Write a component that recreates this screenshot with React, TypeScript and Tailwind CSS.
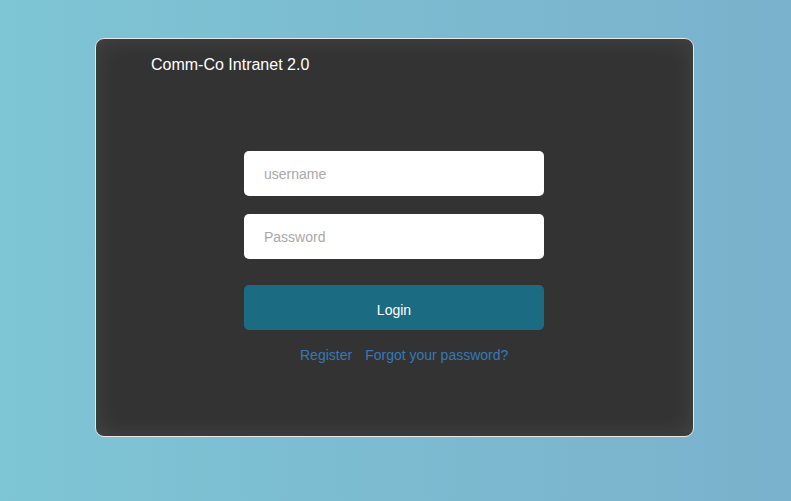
export default function App() {
  return (
    <div
      className="h-[501px] w-full bg-gradient-to-r from-[#7ec5d5] to-[#7ab1cc] pt-[38px] font-['Liberation_Sans',Arial,sans-serif]"
    >
      <div className="ml-[95px] h-[399px] w-[599px] rounded-[9px] border border-[#e8e8e8] bg-[#333333] shadow-[inset_0_0_24px_rgba(255,255,255,0.09)]">
        {/* Header */}
        <div className="pl-[55px] pt-[16px] text-[16px] leading-[20px] text-white">
          Comm-Co Intranet 2.0
        </div>

        {/* Login form */}
        <form className="ml-[148px] mt-[76px] flex w-[300px] flex-col" onSubmit={(e) => e.preventDefault()}>
          <input
            type="text"
            placeholder="username"
            className="h-[45px] w-full rounded-[5px] bg-white px-[20px] text-[14px] text-gray-700 outline-none placeholder:text-[#a9a9a9]"
          />
          <input
            type="password"
            placeholder="Password"
            className="mt-[18px] h-[45px] w-full rounded-[5px] bg-white px-[20px] text-[14px] text-gray-700 outline-none placeholder:text-[#a9a9a9]"
          />
          <button
            type="submit"
            className="mt-[26px] h-[45px] w-full rounded-[5px] bg-[#1b6b83] pt-[5px] text-[14px] text-white"
          >
            Login
          </button>
          <div className="mt-[16px] flex gap-[13px] pl-[56px] text-[14px] leading-[18px] text-[#337ab7]">
            <a href="#">Register</a>
            <a href="#">Forgot your password?</a>
          </div>
        </form>
      </div>
    </div>
  );
}
